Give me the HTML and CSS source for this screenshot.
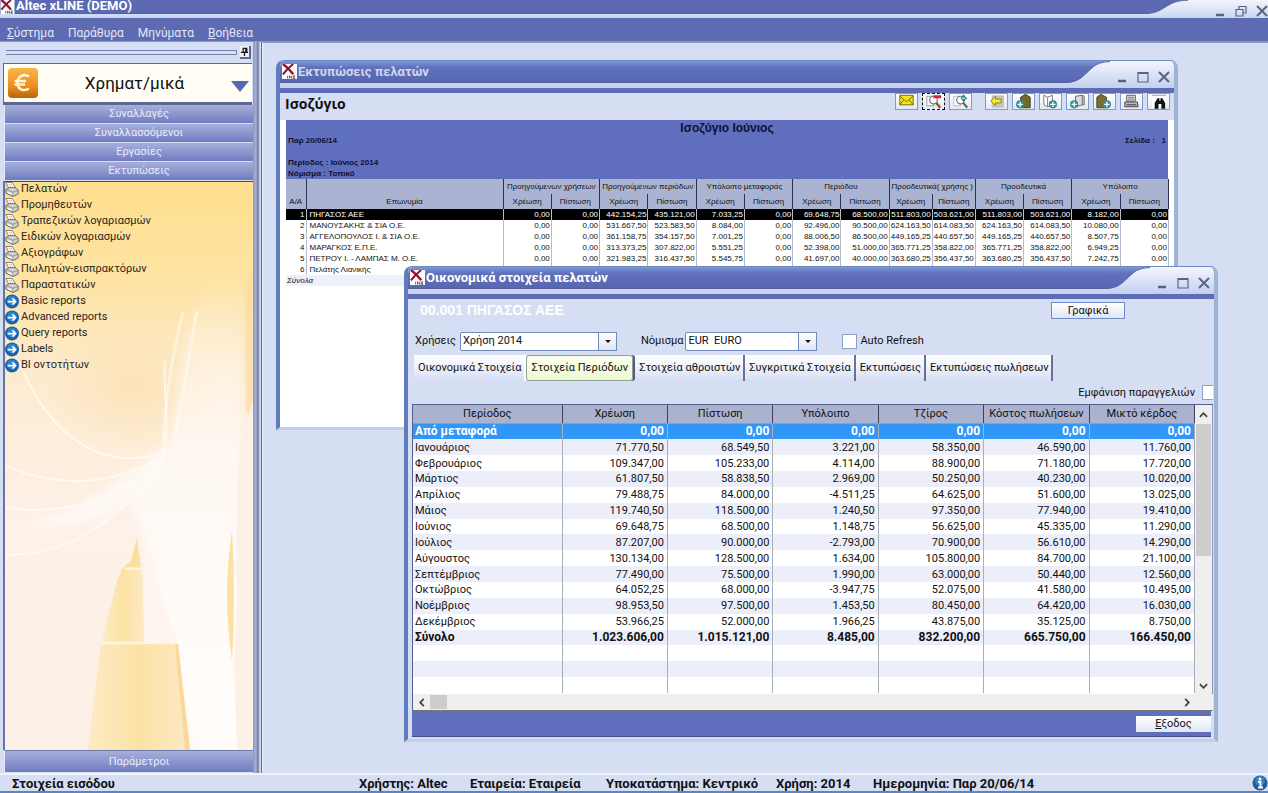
FILE: index.html
```html
<!DOCTYPE html>
<html lang="el">
<head>
<meta charset="utf-8">
<title>Altec xLINE (DEMO)</title>
<link rel="stylesheet" href="styles.css">
</head>
<body>
<svg class="defs" aria-hidden="true">
  <defs>
    <linearGradient id="bar" x1="0" y1="0" x2="0" y2="1">
      <stop offset="0" stop-color="#7f97d6"/><stop offset=".3" stop-color="#6072bd"/><stop offset="1" stop-color="#5766b0"/>
    </linearGradient>
    <symbol id="logo" viewBox="0 0 16 16">
      <rect width="16" height="16" fill="#fff"/>
      <path d="M1 0C5 3 9 7 12 11" stroke="#a0102c" stroke-width="2.6" fill="none"/>
      <path d="M12 0C8 3 4 7 1 11" stroke="#8c1030" stroke-width="2" fill="none"/>
      <path d="M6 12.500V15.500M8 15.500V12.500L10.500 15.500V12.500M14 12.500H12.500V15.500H14M12.500 14H14" stroke="#333" stroke-width=".8" fill="none"/>
    </symbol>
    <symbol id="printer" viewBox="0 0 16 16">
      <path d="M1 0L8 0L12 6L5 8Z" fill="#fff" stroke="#666" stroke-width=".9"/>
      <path d="M4 2.500H8M5 5H9" stroke="#999" stroke-width=".7"/>
      <path d="M1 8L5 6H12L15 9V13L9 16L1 12Z" fill="#d8d6d0" stroke="#555" stroke-width="1"/>
      <path d="M1 8L9 11L15 9M9 11V15" stroke="#777" stroke-width=".8" fill="none"/>
      <path d="M3 11.500L8 13.500" stroke="#fff" stroke-width="1.200"/>
    </symbol>
    <symbol id="go" viewBox="0 0 16 16">
      <circle cx="8" cy="8" r="8" fill="#1a64aa"/><circle cx="8" cy="7" r="5.500" fill="#2b86cf"/>
      <path d="M3 8H12M8.500 4.500L12 8L8.500 11.500" stroke="#fff" stroke-width="2" fill="none"/>
    </symbol>
    <symbol id="curve" viewBox="0 0 48 22" preserveAspectRatio="none">
      <path class="curve-fill" d="M0 0H48C32 1 30 8 20 16C14 21 8 22 0 22Z"/>
      <path d="M48 .5C32 1 30 8 20 16C14 21 8 21.500 0 21.500" stroke="#56619c" fill="none"/>
    </symbol>
    <symbol id="min" viewBox="0 0 12 12"><path d="M2 10H10" stroke="#5b6384" stroke-width="2.500"/></symbol>
    <symbol id="max" viewBox="0 0 12 12"><path d="M1 1.500H11V11H1Z" stroke="#5b6384" stroke-width="1.200" fill="none"/><path d="M1 2H11" stroke="#5b6384" stroke-width="2"/></symbol>
    <symbol id="close" viewBox="0 0 12 12"><path d="M1 1L11 11M11 1L1 11" stroke="#5b6384" stroke-width="2" fill="none"/></symbol>
    <symbol id="restore" viewBox="0 0 12 12"><path d="M4 4V1.500H11V8H8.500M1 4.500H8V11H1Z" stroke="#5b6384" stroke-width="1.200" fill="none"/></symbol>
    <symbol id="plus" viewBox="0 0 8 8"><circle cx="4" cy="4" r="3.800" fill="#2f8c94"/><path d="M1.500 4H6.500M4 1.500V6.500" stroke="#fff" stroke-width="1.300"/></symbol>
  </defs>
</svg>

<header class="app-title">
  <div class="title-fill"><svg class="logo"><use href="#logo"/></svg><h1>Altec xLINE (DEMO)</h1></div>
  <svg class="title-curve"><use href="#curve"/></svg>
  <div class="controls">
    <button aria-label="Ελαχιστοποίηση"><svg><use href="#min"/></svg></button>
    <button aria-label="Επαναφορά"><svg><use href="#restore"/></svg></button>
    <button aria-label="Κλείσιμο"><svg><use href="#close"/></svg></button>
  </div>
</header>
<nav class="menu">
  <button><u>Σ</u>ύστημα</button><button>Παράθυρα</button><button>Μηνύματα</button><button><u>Β</u>οήθεια</button>
</nav>

<main class="work">
  <aside class="side">
    <div class="grip"><i></i><button aria-label="Καρφίτσωμα"><svg viewBox="0 0 10 10"><path d="M3 1H7.500V5.500H9M1 5.500H8M3.500 1V5.500M6.500 1V5M5 5.500V9.500" stroke="#111" stroke-width="1.400" fill="none"/></svg></button></div>
    <div class="module">
      <svg class="euro" viewBox="0 0 30 30">
        <defs><linearGradient id="or" x1="0" y1="0" x2="0" y2="1"><stop offset="0" stop-color="#f9b64c"/><stop offset=".6" stop-color="#ef8f1c"/><stop offset="1" stop-color="#b96408"/></linearGradient></defs>
        <rect x="0" y="0" width="30" height="30" rx="4" fill="url(#or)"/>
        <path d="M21 8.500C15 5 9.500 9 9.500 15C9.500 21 15 24 21 20.500M6.500 13H18M6.500 16.500H17" stroke="#fff3da" stroke-width="2.600" fill="none"/>
      </svg>
      <h2>Χρηματ/μικά</h2>
      <svg class="drop" viewBox="0 0 18 11"><path d="M0 0H18L9 11Z" fill="#5468b4"/></svg>
    </div>
    <button class="group">Συναλλαγές</button>
    <button class="group">Συναλλασσόμενοι</button>
    <button class="group">Εργασίες</button>
    <button class="group">Εκτυπώσεις</button>
    <div class="reports">
      <svg class="art" viewBox="0 0 248 570" preserveAspectRatio="none" aria-hidden="true">
        <defs>
          <linearGradient id="bg" x1="0" y1="0" x2="0" y2="1"><stop offset="0" stop-color="#fedf8e"/><stop offset=".18" stop-color="#fee3a4"/><stop offset=".34" stop-color="#fdebd0"/><stop offset=".6" stop-color="#fdf1e8"/><stop offset="1" stop-color="#fdf0e6"/></linearGradient>
          <linearGradient id="plume" x1="0" y1="0" x2="0" y2="1"><stop offset="0" stop-color="#fffaf4" stop-opacity="0"/><stop offset=".4" stop-color="#fffaf6" stop-opacity=".85"/><stop offset="1" stop-color="#fffdfb"/></linearGradient>
          <radialGradient id="glow"><stop offset="0" stop-color="#fcdfa6" stop-opacity=".6"/><stop offset="1" stop-color="#fcdfa6" stop-opacity="0"/></radialGradient>
          <linearGradient id="pen" x1="0" y1="0" x2="1" y2="0"><stop offset="0" stop-color="#fdebc6"/><stop offset=".5" stop-color="#fbe2a3"/><stop offset="1" stop-color="#fde9c4"/></linearGradient>
          <filter id="soft"><feGaussianBlur stdDeviation="5"/></filter>
        </defs>
        <rect width="248" height="570" fill="url(#bg)"/>
        <ellipse cx="128" cy="205" rx="90" ry="70" fill="url(#glow)"/>
        <path d="M0 345C60 342 105 310 165 260C176 200 170 150 205 100L238 90V570H186L139 357L125 320C90 345 40 350 0 345Z" fill="url(#plume)" filter="url(#soft)"/>
        <path d="M18 190C50 260 100 290 158 272C166 250 158 210 160 180M0 285C60 310 110 302 158 276M0 327C60 335 110 320 158 280M0 374C60 375 110 345 160 280" fill="none" stroke="#fffdf8" stroke-width="2" opacity=".7"/>
        <path d="M158 262C160 220 166 180 178 130M168 262C178 220 182 180 192 130" fill="none" stroke="#fffdf8" stroke-width="3" opacity=".5"/>
        <path d="M240 100L248 90V240L241 230Z" fill="#fbdc9b" opacity=".6"/>
        <path d="M229 480C236 400 226 330 238 250L248 220V570H232Z" fill="#fdf0e6"/>
        <path d="M227 350C221 390 220 430 227 480C230 430 229 390 227 350Z" fill="#fce0a6"/>
        <path d="M132 357L136 387H118L126 380Z" fill="#fbdf9f"/>
        <path d="M118 387H137L139 461H97L112 400Z" fill="url(#pen)"/>
        <path d="M139 366L172 461H139Z" fill="#fef6ee"/>
        <path d="M96 463H172L185 570H83Z" fill="url(#pen)"/>
        <path d="M170 463L180 570H185L173 463Z" fill="#fad79a"/>
        <path d="M120 388H138M96 463H172" stroke="#fff6e4" stroke-width="2"/>
      </svg>
      <ul>
        <li><svg><use href="#printer"/></svg><a href="#">Πελατών</a></li>
        <li><svg><use href="#printer"/></svg><a href="#">Προμηθευτών</a></li>
        <li><svg><use href="#printer"/></svg><a href="#">Τραπεζικών λογαριασμών</a></li>
        <li><svg><use href="#printer"/></svg><a href="#">Ειδικών λογαριασμών</a></li>
        <li><svg><use href="#printer"/></svg><a href="#">Αξιογράφων</a></li>
        <li><svg><use href="#printer"/></svg><a href="#">Πωλητών-εισπρακτόρων</a></li>
        <li><svg><use href="#printer"/></svg><a href="#">Παραστατικών</a></li>
        <li><svg><use href="#go"/></svg><a href="#">Basic reports</a></li>
        <li><svg><use href="#go"/></svg><a href="#">Advanced reports</a></li>
        <li><svg><use href="#go"/></svg><a href="#">Query reports</a></li>
        <li><svg><use href="#go"/></svg><a href="#">Labels</a></li>
        <li><svg><use href="#go"/></svg><a href="#">BI οντοτήτων</a></li>
      </ul>
    </div>
    <button class="group last">Παράμετροι</button>
  </aside>

  <section class="desktop">
    <article class="window win-print">
      <header class="win-title">
        <div class="title-fill dim"><svg class="logo"><use href="#logo"/></svg><h2>Εκτυπώσεις πελατών</h2></div>
        <svg class="title-curve"><use href="#curve"/></svg>
        <div class="controls">
          <button aria-label="Ελαχιστοποίηση"><svg><use href="#min"/></svg></button>
          <button aria-label="Μεγιστοποίηση"><svg><use href="#max"/></svg></button>
          <button aria-label="Κλείσιμο"><svg><use href="#close"/></svg></button>
        </div>
      </header>
      <div class="print-body">
        <div class="print-head">
          <h3>Ισοζύγιο</h3>
          <div class="tools">
            <button aria-label="Αποστολή"><svg viewBox="0 0 22 15"><path d="M4 1H18V11H4Z" fill="#f4e61c" stroke="#6e6a10"/><path d="M4 2L9 6L11 8L13 6L18 2M4 11L8 6M18 11L14 6" stroke="#6e6a10" fill="none"/></svg></button>
            <button class="focus" aria-label="Σμίκρυνση"><svg viewBox="0 0 22 15"><path d="M4 2H11V12H4Z" fill="#fff" stroke="#999"/><circle cx="11" cy="6" r="4" fill="#fff" stroke="#777" stroke-width="1.300"/><path d="M14 9L18 14" stroke="#8a5a20" stroke-width="2.500"/><path d="M11 2.500H19" stroke="#d8203a" stroke-width="3"/></svg></button>
            <button aria-label="Μεγέθυνση"><svg viewBox="0 0 22 15"><path d="M4 2H11V12H4Z" fill="#fff" stroke="#bbb"/><circle cx="11" cy="6" r="4" fill="#fff" stroke="#777" stroke-width="1.300"/><path d="M14 9L18 14" stroke="#555" stroke-width="2"/><path d="M14 0L18 4L14 8L11 4Z" fill="#2f8c94"/><path d="M12.500 4H16" stroke="#fff"/></svg></button>
            <button class="apart" aria-label="Πίσω"><svg viewBox="0 0 22 15"><path d="M6 1H19V14H6Z" fill="#c4c4c4"/><path d="M5 7L10 2V5H16V9H10V12Z" fill="#f7ee22" stroke="#8a8410"/></svg></button>
            <button aria-label="Πρώτη σελίδα"><svg viewBox="0 0 22 15"><path d="M8 3L13 0L18 3V14H8Z" fill="#6f6a30" stroke="#454218"/><use href="#plus" x="3" y="6" width="9" height="9"/></svg></button>
            <button aria-label="Προηγούμενη σελίδα"><svg viewBox="0 0 22 15"><path d="M4 1L8 3V13L4 11ZM8 3L13 1V11L8 13" fill="#fff" stroke="#777"/><use href="#plus" x="9" y="6" width="9" height="9"/></svg></button>
            <button aria-label="Επόμενη σελίδα"><svg viewBox="0 0 22 15"><path d="M9 2L16 1V11L9 13ZM16 1L18 2V11L16 11" fill="#ddd" stroke="#666"/><use href="#plus" x="3" y="6" width="9" height="9"/></svg></button>
            <button aria-label="Τελευταία σελίδα"><svg viewBox="0 0 22 15"><path d="M3 3L7 0L13 3V14H3Z" fill="#77702e" stroke="#454218"/><use href="#plus" x="9" y="6" width="9" height="9"/></svg></button>
            <button aria-label="Εκτύπωση"><svg viewBox="0 0 22 15"><path d="M6 1H15V7H6Z" fill="#fff" stroke="#555"/><path d="M7 3H14M7 5H14" stroke="#555"/><path d="M4 8H17L18 13H4Z" fill="#bbb" stroke="#444"/><path d="M6 11H16" stroke="#333"/></svg></button>
            <button aria-label="Εύρεση"><svg viewBox="0 0 22 15"><path d="M4 1H19V14H4Z" fill="#fff"/><path d="M4 1H19" stroke="#999"/><path d="M7 15V9L10 4H12V7H13V4H15L18 9V15H14V10H11V15Z" fill="#111"/></svg></button>
          </div>
        </div>
        <div class="banner">
          <strong>Ισοζύγιο Ιούνιος</strong>
          <p><span>Παρ 20/06/14</span><span>Σελίδα : &nbsp; 1</span></p>
          <p class="lower">Περίοδος : Ιούνιος 2014<br>Νόμισμα : Τοπικό</p>
        </div>
        <table class="ledger">
          <colgroup><col class="n"><col class="name"><col><col><col><col><col><col><col><col><col class="tight"><col class="tight"><col><col><col><col></colgroup>
          <thead>
            <tr><th rowspan="2" class="low">Α/Α</th><th rowspan="2" class="low">Επωνυμία</th><th colspan="2">Προηγούμενων χρήσεων</th><th colspan="2">Προηγούμενων περιόδων</th><th colspan="2">Υπόλοιπο μεταφοράς</th><th colspan="2">Περιόδου</th><th colspan="2">Προοδευτικά( χρήσης )</th><th colspan="2">Προοδευτικά</th><th colspan="2">Υπόλοιπο</th></tr>
            <tr><th>Χρέωση</th><th>Πίστωση</th><th>Χρέωση</th><th>Πίστωση</th><th>Χρέωση</th><th>Πίστωση</th><th>Χρέωση</th><th>Πίστωση</th><th>Χρέωση</th><th>Πίστωση</th><th>Χρέωση</th><th>Πίστωση</th><th>Χρέωση</th><th>Πίστωση</th></tr>
          </thead>
          <tbody>
            <tr class="sel"><td>1</td><td>ΠΗΓΑΣΟΣ ΑΕΕ</td><td>0,00</td><td>0,00</td><td>442.154,25</td><td>435.121,00</td><td>7.033,25</td><td>0,00</td><td>69.648,75</td><td>68.500,00</td><td>511.803,00</td><td>503.621,00</td><td>511.803,00</td><td>503.621,00</td><td>8.182,00</td><td>0,00</td></tr>
            <tr><td>2</td><td>ΜΑΝΟΥΣΑΚΗΣ &amp; ΣΙΑ Ο.Ε.</td><td>0,00</td><td>0,00</td><td>531.667,50</td><td>523.583,50</td><td>8.084,00</td><td>0,00</td><td>92.496,00</td><td>90.500,00</td><td>624.163,50</td><td>614.083,50</td><td>624.163,50</td><td>614.083,50</td><td>10.080,00</td><td>0,00</td></tr>
            <tr><td>3</td><td>ΑΓΓΕΛΟΠΟΥΛΟΣ Ι. &amp; ΣΙΑ Ο.Ε.</td><td>0,00</td><td>0,00</td><td>361.158,75</td><td>354.157,50</td><td>7.001,25</td><td>0,00</td><td>88.006,50</td><td>86.500,00</td><td>449.165,25</td><td>440.657,50</td><td>449.165,25</td><td>440.657,50</td><td>8.507,75</td><td>0,00</td></tr>
            <tr><td>4</td><td>ΜΑΡΑΓΚΟΣ Ε.Π.Ε.</td><td>0,00</td><td>0,00</td><td>313.373,25</td><td>307.822,00</td><td>5.551,25</td><td>0,00</td><td>52.398,00</td><td>51.000,00</td><td>365.771,25</td><td>358.822,00</td><td>365.771,25</td><td>358.822,00</td><td>6.949,25</td><td>0,00</td></tr>
            <tr><td>5</td><td>ΠΕΤΡΟΥ Ι. - ΛΑΜΠΑΣ Μ. Ο.Ε.</td><td>0,00</td><td>0,00</td><td>321.983,25</td><td>316.437,50</td><td>5.545,75</td><td>0,00</td><td>41.697,00</td><td>40.000,00</td><td>363.680,25</td><td>356.437,50</td><td>363.680,25</td><td>356.437,50</td><td>7.242,75</td><td>0,00</td></tr>
            <tr><td>6</td><td>Πελάτης Λιανικής</td><td></td><td></td><td></td><td></td><td></td><td></td><td></td><td></td><td></td><td></td><td></td><td></td><td></td><td></td></tr>
            <tr class="sum"><td colspan="16">Σύνολα</td></tr>
          </tbody>
        </table>
      </div>
    </article>

    <article class="window win-data">
      <header class="win-title">
        <div class="title-fill"><svg class="logo"><use href="#logo"/></svg><h2>Οικονομικά στοιχεία πελατών</h2></div>
        <svg class="title-curve"><use href="#curve"/></svg>
        <div class="controls">
          <button aria-label="Ελαχιστοποίηση"><svg><use href="#min"/></svg></button>
          <button aria-label="Μεγιστοποίηση"><svg><use href="#max"/></svg></button>
          <button aria-label="Κλείσιμο"><svg><use href="#close"/></svg></button>
        </div>
      </header>
      <div class="data-body">
        <div class="customer"><h3>00.001 ΠΗΓΑΣΟΣ ΑΕΕ</h3><button class="push">Γραφικά</button></div>
        <div class="filters">
          <label for="year">Χρήσεις</label>
          <span class="combo wide"><select id="year"><option>Χρήση 2014</option></select><i></i></span>
          <label for="cur" class="second">Νόμισμα</label>
          <span class="combo"><select id="cur"><option>EUR&nbsp; EURO</option></select><i></i></span>
          <input type="checkbox" id="auto"><label for="auto">Auto Refresh</label>
        </div>
        <div class="tabs" role="tablist">
          <button role="tab">Οικονομικά Στοιχεία</button><button role="tab" aria-selected="true" class="on">Στοιχεία Περιόδων</button><button role="tab">Στοιχεία αθροιστών</button><button role="tab">Συγκριτικά Στοιχεία</button><button role="tab">Εκτυπώσεις</button><button role="tab">Εκτυπώσεις πωλήσεων</button>
        </div>
        <div class="orders"><label for="ord">Εμφάνιση παραγγελιών</label><input type="checkbox" id="ord"></div>
        <div class="grid-wrap">
          <table class="periods">
            <colgroup><col class="month"><col><col><col><col><col><col></colgroup>
            <thead><tr><th>Περίοδος</th><th>Χρέωση</th><th>Πίστωση</th><th>Υπόλοιπο</th><th>Τζίρος</th><th>Κόστος πωλήσεων</th><th>Μικτό κέρδος</th></tr></thead>
            <tbody>
              <tr class="sel"><td>Από μεταφορά</td><td>0,00</td><td>0,00</td><td>0,00</td><td>0,00</td><td>0,00</td><td>0,00</td></tr>
              <tr><td>Ιανουάριος</td><td>71.770,50</td><td>68.549,50</td><td>3.221,00</td><td>58.350,00</td><td>46.590,00</td><td>11.760,00</td></tr>
              <tr><td>Φεβρουάριος</td><td>109.347,00</td><td>105.233,00</td><td>4.114,00</td><td>88.900,00</td><td>71.180,00</td><td>17.720,00</td></tr>
              <tr><td>Μάρτιος</td><td>61.807,50</td><td>58.838,50</td><td>2.969,00</td><td>50.250,00</td><td>40.230,00</td><td>10.020,00</td></tr>
              <tr><td>Απρίλιος</td><td>79.488,75</td><td>84.000,00</td><td>-4.511,25</td><td>64.625,00</td><td>51.600,00</td><td>13.025,00</td></tr>
              <tr><td>Μάιος</td><td>119.740,50</td><td>118.500,00</td><td>1.240,50</td><td>97.350,00</td><td>77.940,00</td><td>19.410,00</td></tr>
              <tr><td>Ιούνιος</td><td>69.648,75</td><td>68.500,00</td><td>1.148,75</td><td>56.625,00</td><td>45.335,00</td><td>11.290,00</td></tr>
              <tr><td>Ιούλιος</td><td>87.207,00</td><td>90.000,00</td><td>-2.793,00</td><td>70.900,00</td><td>56.610,00</td><td>14.290,00</td></tr>
              <tr><td>Αύγουστος</td><td>130.134,00</td><td>128.500,00</td><td>1.634,00</td><td>105.800,00</td><td>84.700,00</td><td>21.100,00</td></tr>
              <tr><td>Σεπτέμβριος</td><td>77.490,00</td><td>75.500,00</td><td>1.990,00</td><td>63.000,00</td><td>50.440,00</td><td>12.560,00</td></tr>
              <tr><td>Οκτώβριος</td><td>64.052,25</td><td>68.000,00</td><td>-3.947,75</td><td>52.075,00</td><td>41.580,00</td><td>10.495,00</td></tr>
              <tr><td>Νοέμβριος</td><td>98.953,50</td><td>97.500,00</td><td>1.453,50</td><td>80.450,00</td><td>64.420,00</td><td>16.030,00</td></tr>
              <tr><td>Δεκέμβριος</td><td>53.966,25</td><td>52.000,00</td><td>1.966,25</td><td>43.875,00</td><td>35.125,00</td><td>8.750,00</td></tr>
              <tr class="total"><td>Σύνολο</td><td>1.023.606,00</td><td>1.015.121,00</td><td>8.485,00</td><td>832.200,00</td><td>665.750,00</td><td>166.450,00</td></tr>
              <tr><td></td><td></td><td></td><td></td><td></td><td></td><td></td></tr>
              <tr><td></td><td></td><td></td><td></td><td></td><td></td><td></td></tr>
              <tr><td></td><td></td><td></td><td></td><td></td><td></td><td></td></tr>
            </tbody>
          </table>
          <div class="vbar"><svg viewBox="0 0 10 6"><path d="M1 5L5 1L9 5" /></svg><i></i><svg viewBox="0 0 10 6"><path d="M1 1L5 5L9 1"/></svg></div>
        </div>
        <div class="hbar"><svg viewBox="0 0 6 10"><path d="M5 1L1 5L5 9"/></svg><i></i><svg viewBox="0 0 6 10"><path d="M1 1L5 5L1 9"/></svg></div>
        <footer><button><u>Ε</u>ξοδος</button></footer>
      </div>
    </article>
  </section>
</main>

<footer class="status">
  <span class="login">Στοιχεία εισόδου</span>
  <span class="user">Χρήστης: Altec</span>
  <span class="company">Εταιρεία: Εταιρεία</span>
  <span class="branch">Υποκατάστημα: Κεντρικό</span>
  <span class="year">Χρήση: 2014</span>
  <span class="date">Ημερομηνία: Παρ 20/06/14</span>
  <svg viewBox="0 0 16 16"><circle cx="8" cy="8" r="7.500" fill="#1f5b96"/><circle cx="8" cy="6" r="5" fill="#3d7fbd"/><circle cx="8" cy="4" r="1.500" fill="#fff"/><path d="M6 7H8.500V12M6 12.500H11" stroke="#fff" stroke-width="1.800" fill="none"/></svg>
</footer>
</body>
</html>
```
FILE: styles.css
```css
* { box-sizing: border-box; }
body {
  margin: 0;
  height: 100vh;
  display: flex;
  flex-direction: column;
  overflow: hidden;
  background: #d6def3;
  color: #111;
  font: 11px/16px Roboto, "Liberation Sans", sans-serif;
}
h1, h2, h3, p, ul { margin: 0; padding: 0; }
button, select, input { font: inherit; color: inherit; margin: 0; }
button { border: 0; padding: 0; background: none; }
svg { display: block; flex: none; }
.defs { position: absolute; width: 0; height: 0; }
table { border-collapse: collapse; table-layout: fixed; }

/* title bars */
.app-title { display: flex; height: 18px; background: linear-gradient(#f2f5fc, #c9d6f2); --curve: #5a69b0; }
.curve-fill { fill: var(--curve, url(#bar)); }
.title-fill {
  flex: 1;
  display: flex;
  align-items: center;
  background: linear-gradient(#7f97d6, #6072bd 30%, #5766b0);
  border-bottom: 1px solid #56619c;
  color: #fff;
}
.title-fill h1, .title-fill h2 { font: bold 13px/18px Roboto, sans-serif; white-space: nowrap; }
.title-fill.dim h2 { color: #d0d6ee; }
.logo { width: 15px; height: 15px; margin-right: 1px; }
.app-title .title-fill { height: 14px; background: #5a69b0; align-items: flex-start; }
.app-title .logo { height: 14px; }
.app-title h1 { line-height: 12px; }
.title-curve { width: 48px; height: 22px; }
.app-title .title-curve { height: 14px; }
.controls { display: flex; align-items: center; gap: 9px; padding: 4px 0 0 6px; }
.controls button, .controls svg { width: 12px; height: 12px; }
.app-title .controls { padding-left: 26px; }

.menu {
  display: flex;
  gap: 14px;
  height: 24px;
  padding: 7px 7px 0;
  background: #5d6cb2;
  border-bottom: 1px solid #8d97b8;
  color: #e2e6f5;
}
.menu button { height: 16px; font-size: 12px; }

.work { flex: 1; display: flex; min-height: 0; }

/* sidebar */
.side {
  width: 262px;
  flex: none;
  display: flex;
  flex-direction: column;
  padding: 0 1px 0 3px;
  border-right: 1px solid #5c6796;
  background: linear-gradient(90deg, #d6def3 253px, #8e98be 253px, #a8b1d4 256px, #6d78a8 258px, #d6def3 260px);
}
.grip { display: flex; align-items: center; height: 21px; padding: 0 9px 0 3px; gap: 3px; }
.grip i { flex: 1; height: 5px; border: 1px solid #7482ac; border-left: 0; }
.grip button { width: 11px; height: 13px; border: 1px solid #5c6796; border-width: 0 2px 2px 0; background: #eef1fa; }
.grip svg { width: 9px; height: 10px; }
.module {
  display: flex;
  align-items: center;
  height: 42px;
  margin-right: 8px;
  padding: 0 3px 0 4px;
  background: #fffdf4;
  border: 1px solid #5c6796;
  border-width: 1px 0 3px 1px;
}
.module h2 { flex: 1; text-align: center; font: 17px/24px Roboto, sans-serif; }
.euro { width: 30px; height: 30px; }
.drop { width: 18px; height: 11px; margin-top: 7px; }
.group {
  width: 249px;
  height: 18px;
  margin: 0 0 1px 1px;
  padding-left: 20px;
  flex: none;
  border-left: 1px solid #e6ebf8;
  background: linear-gradient(#a6afd9, #8c96ce 50%, #6f7cc0);
  color: #e9ecf9;
  line-height: 18px;
}
.group.last { height: 22px; border-top: 1px solid #6c77aa; }
.reports { position: relative; flex: 1; min-height: 0; width: 250px; border-left: 2px solid #6773a5; border-top: 1px solid #4e4a55; }
.art { position: absolute; left: 0; top: 0; width: 100%; height: 100%; }
.reports ul { position: relative; list-style: none; }
.reports li { display: flex; align-items: center; height: 16px; gap: 2px; padding-bottom: 2px; }
.reports li svg { width: 14px; height: 15px; }
.reports a { color: #2a2522; text-decoration: none; }

/* desktop windows */
.desktop { position: relative; flex: 1; overflow: hidden; border-top: 1px solid #8d97b8; border-left: 1px solid #f0f3fb; }
.window {
  position: absolute;
  display: flex;
  flex-direction: column;
  border: 1px solid #6d8cc4;
  border-width: 1px 4px 3px;
  border-left-color: #5f7dbd;
  border-right-color: #9fb4d2;
  border-bottom-color: #c3cfea;
  border-radius: 8px 8px 0 0;
  background: #d6def3;
  overflow: hidden;
}
.win-print { left: 13px; top: 17px; width: 902px; height: 370px; }
.win-data { left: 141px; top: 223px; width: 814px; height: 476px; }
.win-title {
  display: flex;
  height: 32px;
  flex: none;
  background: linear-gradient(#f4f6fc, #c3d1f1 26px);
  border-bottom: 5px solid #5e6db3;
}
.win-title .title-fill { height: 22px; padding-left: 2px; }
.win-title .controls { height: 27px; padding: 4px 4px 0 6px; }

.print-body { flex: 1; min-height: 0; padding: 0 4px; display: flex; flex-direction: column; background: linear-gradient(#d6def3 27px, #fff 27px); }
.print-head { display: flex; justify-content: space-between; align-items: flex-start; height: 27px; padding-left: 1px; flex: none; }
.print-head h3 { font: bold 14px/21px "Open Sans", "Noto Sans", sans-serif; }
.tools { display: flex; gap: 4px; }
.tools button { width: 23px; height: 17px; border: 1px solid #7f9ccc; background: linear-gradient(#fff, #e4e9f6); }
.tools svg { width: 21px; height: 15px; }
.tools .apart { margin-left: 9px; }
.tools .focus { border: 1px dashed #111; }
.banner {
  flex: none;
  height: 59px;
  padding: 1px 2px;
  margin: 0 2px;
  background: #606fbd;
  color: #0c1036;
  font: bold 8px/11px "Liberation Sans", sans-serif;
}
.banner strong { display: block; text-align: center; font-size: 12px; line-height: 14px; }
.banner p { display: flex; justify-content: space-between; }
.banner p.lower { display: block; padding-top: 11px; }
.ledger { width: 883px; margin: 0 2px; font: 8px/11px "Liberation Sans", sans-serif; background: #fff; color: #111; }
.ledger .n { width: 20px; }
.ledger .name { width: 197px; }
.ledger .tight { width: 43px; }
.ledger th { height: 15px; padding: 0; font-weight: normal; white-space: nowrap; background: #aab4d2; border-right: 1px solid #2c3352; overflow: hidden; }
.ledger th.low { vertical-align: bottom; padding-bottom: 2px; }
.ledger td { height: 11px; padding: 0 1px; text-align: right; white-space: nowrap; border-right: 1px solid #b5bccd; }
.ledger td:nth-child(2) { text-align: left; padding-left: 3px; }
.ledger .sel { background: #000; color: #fff; }
.ledger .sum td { text-align: left; font-style: italic; background: #eef1f9; border: 0; }

.data-body { flex: 1; min-height: 0; display: flex; flex-direction: column; padding: 0 1px 0 4px; }
.customer { display: flex; justify-content: space-between; height: 32px; padding: 3px 88px 0 8px; }
.customer h3 { font: bold 14px/16px "Liberation Sans", sans-serif; color: #fff; }
.push { width: 74px; height: 17px; border: 1px solid #6f8cc4; background: linear-gradient(#fff, #dfe6f6); }
.filters { display: flex; align-items: center; height: 20px; padding-left: 3px; }
.combo { position: relative; display: flex; width: 132px; margin-left: 2px; }
.combo.wide { width: 157px; margin-left: 4px; }
.combo select { width: 100%; height: 19px; padding: 0 2px; border: 1px solid #7088bb; border-radius: 2px; background: #fff; appearance: none; }
.combo i { position: absolute; right: 0; top: 0; width: 19px; height: 19px; border: 1px solid #7088bb; background: linear-gradient(#fff, #dde5f5); pointer-events: none; }
.combo i::after { content: ""; position: absolute; left: 6px; top: 7px; border: 3px solid transparent; border-top-color: #111; border-bottom: 0; }
.filters .second { margin-left: 24px; }
input[type="checkbox"] { appearance: none; width: 15px; height: 15px; border: 1px solid #8fa0c8; background: #fff; }
.filters input { margin: 0 3px 0 25px; }
.tabs { display: flex; margin-top: 4px; padding-left: 2px; height: 26px; flex: none; }
.tabs button { padding: 0 3px 0 4px; white-space: nowrap; background: linear-gradient(#fff, #eef2fb 12px, #d6def3); border-right: 2px solid #6b7290; height: 26px; }
.tabs button:has(+ .on) { border-right-color: #fff; }
.tabs .on { padding: 0 4px; border: 1px solid #8ea394; border-radius: 3px; background: linear-gradient(#fdfff0, #eefad2); box-shadow: 2px 0 #555e78; margin-right: 2px; }
.orders { display: flex; justify-content: flex-end; align-items: center; gap: 7px; height: 23px; flex: none; }
.orders input { width: 11px; border-right: 0; }
.grid-wrap { display: flex; height: 290px; flex: none; border-top: 1px solid #55608f; border-left: 1px solid #55608f; background: #fff; }
.periods { flex: 1; width: 780px; height: 288px; }
.periods .month { width: 149px; }
.periods th { height: 18px; padding: 0; font-weight: normal; background: #aab2cd; border-right: 1px solid #3a4160; border-bottom: 1px solid #939cbb; line-height: 15px; }
.periods td { height: 15px; padding: 0 3px 0 2px; text-align: right; line-height: 15px; border-right: 1px solid #a9aebb; white-space: nowrap; }
.periods td:first-child { text-align: left; }
.periods tbody tr:nth-child(even) { background: #eceff9; }
.periods tbody .sel { background: #3096f8; color: #fff; font-weight: bold; font-size: 12px; }
.periods .total { font-weight: bold; font-size: 12px; }
.vbar { width: 18px; display: flex; flex-direction: column; align-items: center; background: #efefef; padding: 7px 0 5px; border-right: 1px solid #8e98b8; }
.vbar svg { width: 9px; height: 6px; }
.vbar i { width: 15px; height: 132px; margin: 6px 0 auto; background: #cdcdcd; }
.vbar path, .hbar path { stroke: #444; stroke-width: 2; fill: none; }
.hbar { display: flex; align-items: center; height: 17px; flex: none; padding: 0 23px 0 6px; background: #efefef; border-left: 1px solid #55608f; border-bottom: 1px solid #777; }
.hbar svg { width: 6px; height: 9px; }
.hbar i { width: 17px; height: 14px; margin: 0 auto 0 5px; background: #cdcdcd; }
.data-body footer { display: flex; justify-content: flex-end; align-items: center; height: 26px; background: #606fbd; border-bottom: 1px solid #454f86; margin-right: 2px; }
.data-body footer button { width: 75px; height: 16px; background: linear-gradient(#fff, #dfe6f6); }

/* status bar */
.status {
  display: grid;
  grid-template-columns: 347px 111px 136px 170px 97px 1fr 16px;
  height: 20px;
  padding-left: 12px;
  flex: none;
  border-top: 2px solid #f1f4fb;
  border-bottom: 2px solid #5b84c0;
  font: bold 13px/18px Roboto, sans-serif;
  white-space: nowrap;
}
.status svg { width: 16px; height: 16px; }
```
